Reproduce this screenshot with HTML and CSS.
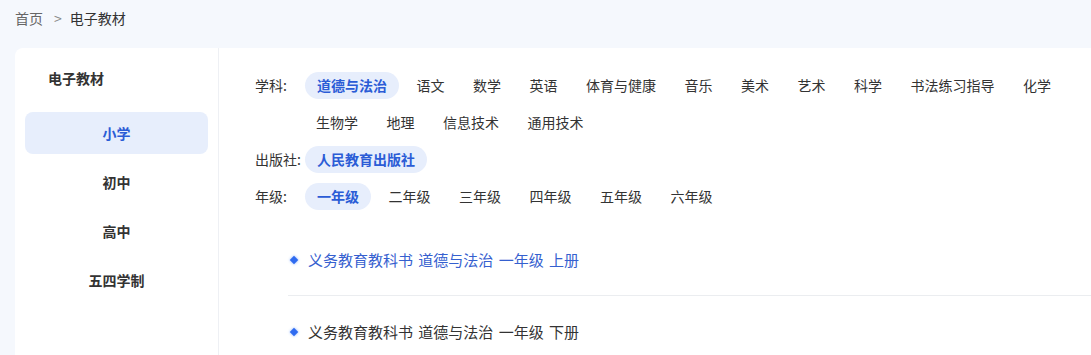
FILE: index.html
```html
<!DOCTYPE html>
<html>
<head>
    <meta charset="utf-8">
    <meta name="viewport" content="width=device-width">
    <link rel="stylesheet" href="styles.css">
</head>
<body>
    <div class="crumb">
        <a href="#">首页</a><span class="sep">&gt;</span><span class="here">电子教材</span>
    </div>
    <div class="card">
        <div class="side">
            <div class="side-title">电子教材</div>
            <a class="side-item active" href="#">小学</a>
            <a class="side-item" href="#">初中</a>
            <a class="side-item" href="#">高中</a>
            <a class="side-item" href="#">五四学制</a>
        </div>
        <div class="main">
            <div class="filter">
                <div class="label">学科:</div>
                <div class="tags">
                    <span class="tag on">道德与法治</span>
                    <span class="tag">语文</span>
                    <span class="tag">数学</span>
                    <span class="tag">英语</span>
                    <span class="tag">体育与健康</span>
                    <span class="tag">音乐</span>
                    <span class="tag">美术</span>
                    <span class="tag">艺术</span>
                    <span class="tag">科学</span>
                    <span class="tag">书法练习指导</span>
                    <span class="tag">化学</span>
                    <span class="tag">生物学</span>
                    <span class="tag">地理</span>
                    <span class="tag">信息技术</span>
                    <span class="tag">通用技术</span>
                </div>
            </div>
            <div class="filter">
                <div class="label">出版社:</div>
                <div class="tags">
                    <span class="tag on">人民教育出版社</span>
                </div>
            </div>
            <div class="filter">
                <div class="label">年级:</div>
                <div class="tags">
                    <span class="tag on">一年级</span>
                    <span class="tag">二年级</span>
                    <span class="tag">三年级</span>
                    <span class="tag">四年级</span>
                    <span class="tag">五年级</span>
                    <span class="tag">六年级</span>
                </div>
            </div>
            <ul class="books">
                <li class="book hover"><i class="dot"></i>义务教育教科书 道德与法治 一年级 上册</li>
                <li class="book"><i class="dot"></i>义务教育教科书 道德与法治 一年级 下册</li>
            </ul>
        </div>
    </div>
</body>
</html>
```

FILE: styles.css
```css
html {overflow: hidden}
body {
    margin: 0;
    background: #f5f8fd;
    color: #333;
    font-family: "Noto Sans CJK SC", "Microsoft YaHei", sans-serif;
    font-size: 14px;
}
a {text-decoration: none; color: inherit}

.crumb {
    height: 36px;
    line-height: 36px;
    padding: 0 15px;
    margin-bottom: 12px;
    color: #666;
}
.crumb .sep {margin: 0 8px 0 11px; color: #888}
.crumb .here {color: #333}

.card {
    display: flex;
    width: 1180px;
    height: 320px;
    margin-left: 15px;
    background: #fff;
    border-radius: 8px 8px 0 0;
}

.side {
    width: 183px;
    flex: none;
    padding: 20px 10px 0;
    border-right: 1px solid #eef0f4;
}
.side-title {
    line-height: 20px;
    padding-left: 23px;
    margin-bottom: 24px;
    font-weight: bold;
}
.side-item {
    display: block;
    height: 42px;
    line-height: 42px;
    margin-bottom: 7px;
    text-align: center;
    font-weight: bold;
    border-radius: 8px;
}
.side-item.active {background: #e7eefc; color: #2b5cd6}

.main {
    flex: 1;
    padding: 24px 0 0 36px;
}
.filter {display: flex}
.label {
    width: 50px;
    flex: none;
    line-height: 27px;
}
.tags {
    display: flex;
    flex-wrap: wrap;
    width: 820px;
    row-gap: 10px;
    column-gap: 6.5px;
    margin-bottom: 10px;
}
.tag {
    height: 27px;
    line-height: 27px;
    padding: 0 11px;
    border-radius: 14px;
}
.tag.on {background: #e7eefc; color: #2b5cd6; font-weight: bold; padding: 0 12px}

.books {
    list-style: none;
    margin: 4px 0 0;
    padding: 0 0 0 33px;
}
.book {
    display: flex;
    align-items: center;
    height: 71px;
    font-size: 15px;
    word-spacing: 2px;
    border-bottom: 1px solid #ebedf0;
}
.book:last-child {border-bottom: 0}
.book.hover {color: #3560cf}
.dot {
    width: 6px;
    height: 6px;
    margin: 0 11px 0 3px;
    background: #2f6bf0;
    transform: rotate(45deg);
    box-shadow: 0 0 3px #8fb4ff;
}
```
